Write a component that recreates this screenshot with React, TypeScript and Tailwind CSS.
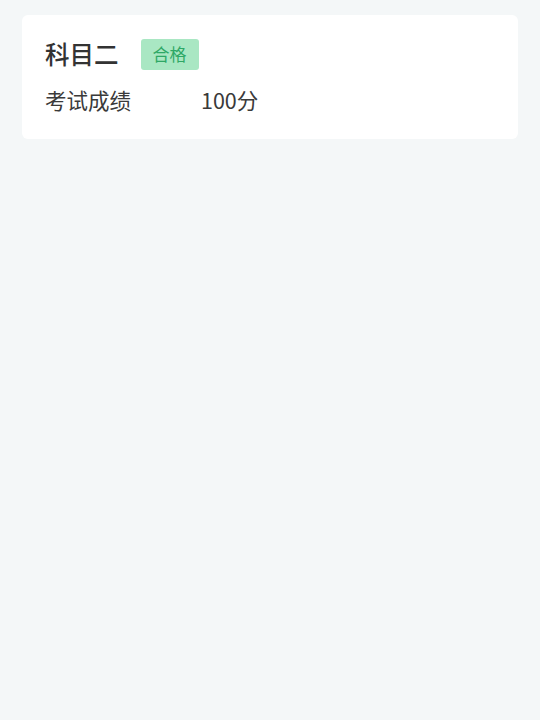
export default function App() {
  return (
    <div
      className="min-h-[720px] bg-[#f4f7f8] px-[22px] pt-[15px]"
      style={{ fontFamily: '"Noto Sans CJK SC", "Noto Sans", sans-serif' }}
    >
      <div className="rounded-[6px] bg-white px-[23px] pt-[23px] pb-[24px]">
        <div className="flex items-center">
          <h2 className="text-[24.5px] leading-[32px] font-medium text-[#333]">科目二</h2>
          <span className="ml-[22px] rounded-[3px] bg-[#a9e7c3] px-[12px] h-[31px] flex items-center text-[17px] text-[#2ea866]">
            合格
          </span>
        </div>
        <div className="mt-[15px] flex items-center text-[21.5px] leading-[30px] text-[#3a3a3a]">
          <span className="w-[156px]">考试成绩</span>
          <span>100分</span>
        </div>
      </div>
    </div>
  )
}
